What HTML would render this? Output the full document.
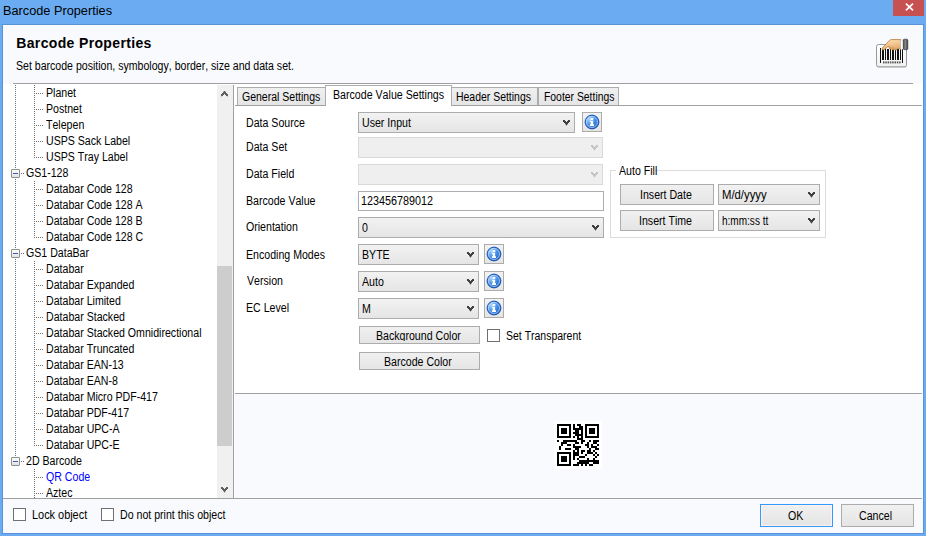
<!DOCTYPE html>
<html><head><meta charset="utf-8"><title>Barcode Properties</title>
<style>
*{margin:0;padding:0;box-sizing:border-box}
html,body{width:926px;height:536px;overflow:hidden}
body{position:relative;background:#6aabf2;font-family:"Liberation Sans",sans-serif;color:#000}
.a{position:absolute}
.t{position:absolute;white-space:nowrap;font-kerning:none;transform-origin:0 0}
.combo{position:absolute;border:1px solid #acacac;background:linear-gradient(#f2f2f2,#e5e5e5)}
.combo.dis{border-color:#d9d9d9;background:#efefef}
.btn{position:absolute;border:1px solid #acacac;background:linear-gradient(#f0f0f0,#e5e5e5);overflow:hidden}
.tb{position:absolute;border:1px solid #abadb3;background:#fff}
.chk{position:absolute;width:13px;height:13px;border:1px solid #707070;background:#fff}
.info{position:absolute;border:1px solid #acacac;background:linear-gradient(#f2f2f2,#e5e5e5)}
</style></head><body>
<div class="a" style="left:2px;top:24px;width:922px;height:510px;background:#5a92d8"></div><div class="a" style="left:3px;top:25px;width:920px;height:508px;background:#fff"></div><div class="a" style="left:3px;top:25px;width:920px;height:59px;background:#f9fafd"></div><div class="t" style="left:2.66px;top:4px;font-size:12.5px;line-height:14px;font-weight:normal;color:#000;transform:scaleX(1.0187);">Barcode Properties</div><div class="a" style="left:893px;top:0px;width:31px;height:16px;background:#c75050"></div><svg class="a" style="left:905px;top:3px" width="9" height="8" viewBox="0 0 9 8"><path d="M0.9 0.7L8 7.3M8 0.7L0.9 7.3" stroke="#fff" stroke-width="1.7"/></svg><div class="t" style="left:16.26px;top:35px;font-size:14px;line-height:16px;font-weight:bold;color:#000;letter-spacing:0.35px;">Barcode Properties</div><div class="t" style="left:15.72px;top:59px;font-size:12px;line-height:14px;font-weight:normal;color:#000;transform:scaleX(0.8808);">Set barcode position, symbology, border, size and data set.</div><div class="a" style="left:13px;top:83px;width:900px;height:1px;background:#a0a0a0"></div><svg class="a" style="left:872px;top:34px" width="40" height="38" viewBox="0 0 40 38">
<defs>
<linearGradient id="cuffg" x1="0" x2="1"><stop offset="0" stop-color="#4a4a4a"/><stop offset="0.45" stop-color="#8a8a8a"/><stop offset="1" stop-color="#3a3a3a"/></linearGradient>
<linearGradient id="skin" x1="0" y1="0" x2="0.3" y2="1"><stop offset="0" stop-color="#fbe0b8"/><stop offset="0.6" stop-color="#f2c48c"/><stop offset="1" stop-color="#e0a868"/></linearGradient>
<linearGradient id="card" x1="0" y1="0" x2="0" y2="1"><stop offset="0" stop-color="#ffffff"/><stop offset="1" stop-color="#f0f0f0"/></linearGradient>
</defs>
<rect x="4.5" y="11.5" width="30.5" height="22.5" rx="2.2" fill="#000" opacity="0.10"/>
<rect x="4.5" y="10.5" width="30" height="22.3" rx="2" fill="url(#card)" stroke="#8f8f8f" stroke-width="0.9"/>
<g fill="#111" shape-rendering="crispEdges">
<rect x="8" y="14" width="1" height="15"/>
<rect x="10" y="15" width="2" height="11"/>
<rect x="13" y="15" width="1" height="11"/>
<rect x="15" y="15" width="2" height="11"/>
<rect x="18" y="15" width="1" height="11"/>
<rect x="20" y="15" width="2" height="11"/>
<rect x="23" y="15" width="1" height="11"/>
<rect x="25" y="15" width="2" height="11"/>
<rect x="28" y="15" width="1" height="11"/>
<rect x="30" y="14" width="1" height="15"/>
</g>
<g fill="#555"><rect x="11" y="27.4" width="1.5" height="2"/><rect x="13.3" y="27.4" width="1.5" height="2"/><rect x="15.6" y="27.4" width="1.5" height="2"/><rect x="17.9" y="27.4" width="1.5" height="2"/><rect x="20.2" y="27.4" width="1.5" height="2"/><rect x="22.5" y="27.4" width="1.5" height="2"/><rect x="24.8" y="27.4" width="1.5" height="2"/><rect x="27.1" y="27.4" width="1.5" height="2"/></g>
<path d="M10.4 15.6C9.9 15.1 10.1 14.3 10.6 13.7L17.2 6.6C17.9 5.9 18.8 5.5 19.8 5.5L28.6 5.6L28.6 14.6L25.2 14.8C25.2 16.1 23.2 16.6 22.4 15.3C21.8 16.1 19.9 16 19.6 14.8C19 15.3 17.3 15.2 17.1 13.8C16.9 13.2 16.6 12.4 16.4 12L12.6 15.4C11.9 16 10.9 16.1 10.4 15.6Z" fill="url(#skin)" stroke="#b27434" stroke-width="0.75" stroke-linejoin="round"/>
<path d="M17.3 12.2C18.1 12.5 18.9 13.2 19.4 14.2M19.9 12.8C20.8 13.1 21.7 13.9 22.2 14.9" fill="none" stroke="#c98c4c" stroke-width="0.55"/>
<rect x="28.4" y="6" width="2.8" height="9.2" fill="#fdfdfd" stroke="#a0a0a0" stroke-width="0.4"/>
<rect x="31.3" y="5.2" width="4.5" height="10.5" rx="1.2" fill="url(#cuffg)" stroke="#2a2a2a" stroke-width="0.6"/>
</svg><div class="a" style="left:3px;top:84px;width:214px;height:414px;overflow:hidden;background:#fff"><svg class="a" style="left:12px;top:1px" width="1" height="83" shape-rendering="crispEdges"><line x1="0.5" y1="0" x2="0.5" y2="83" stroke="#707070" stroke-dasharray="1 1"/></svg><svg class="a" style="left:12px;top:95px" width="1" height="69" shape-rendering="crispEdges"><line x1="0.5" y1="0" x2="0.5" y2="69" stroke="#707070" stroke-dasharray="1 1"/></svg><svg class="a" style="left:12px;top:175px" width="1" height="197" shape-rendering="crispEdges"><line x1="0.5" y1="0" x2="0.5" y2="197" stroke="#707070" stroke-dasharray="1 1"/></svg><svg class="a" style="left:31px;top:1px" width="1" height="73" shape-rendering="crispEdges"><line x1="0.5" y1="0" x2="0.5" y2="73" stroke="#707070" stroke-dasharray="1 1"/></svg><svg class="a" style="left:31px;top:97px" width="1" height="57" shape-rendering="crispEdges"><line x1="0.5" y1="0" x2="0.5" y2="57" stroke="#707070" stroke-dasharray="1 1"/></svg><svg class="a" style="left:31px;top:177px" width="1" height="185" shape-rendering="crispEdges"><line x1="0.5" y1="0" x2="0.5" y2="185" stroke="#707070" stroke-dasharray="1 1"/></svg><svg class="a" style="left:31px;top:385px" width="1" height="29" shape-rendering="crispEdges"><line x1="0.5" y1="0" x2="0.5" y2="29" stroke="#707070" stroke-dasharray="1 1"/></svg><svg class="a" style="left:33px;top:9px" width="7" height="1" shape-rendering="crispEdges"><line x1="0" y1="0.5" x2="7" y2="0.5" stroke="#707070" stroke-dasharray="1 1"/></svg><div class="t" style="left:42.63px;top:2px;font-size:12px;line-height:14px;font-weight:normal;color:#000;transform:scaleX(0.8830);">Planet</div><svg class="a" style="left:33px;top:25px" width="7" height="1" shape-rendering="crispEdges"><line x1="0" y1="0.5" x2="7" y2="0.5" stroke="#707070" stroke-dasharray="1 1"/></svg><div class="t" style="left:42.63px;top:18px;font-size:12px;line-height:14px;font-weight:normal;color:#000;transform:scaleX(0.8830);">Postnet</div><svg class="a" style="left:33px;top:41px" width="7" height="1" shape-rendering="crispEdges"><line x1="0" y1="0.5" x2="7" y2="0.5" stroke="#707070" stroke-dasharray="1 1"/></svg><div class="t" style="left:43.26px;top:34px;font-size:12px;line-height:14px;font-weight:normal;color:#000;transform:scaleX(0.8830);">Telepen</div><svg class="a" style="left:33px;top:57px" width="7" height="1" shape-rendering="crispEdges"><line x1="0" y1="0.5" x2="7" y2="0.5" stroke="#707070" stroke-dasharray="1 1"/></svg><div class="t" style="left:42.68px;top:50px;font-size:12px;line-height:14px;font-weight:normal;color:#000;transform:scaleX(0.8830);">USPS Sack Label</div><svg class="a" style="left:33px;top:73px" width="7" height="1" shape-rendering="crispEdges"><line x1="0" y1="0.5" x2="7" y2="0.5" stroke="#707070" stroke-dasharray="1 1"/></svg><div class="t" style="left:42.68px;top:66px;font-size:12px;line-height:14px;font-weight:normal;color:#000;transform:scaleX(0.8830);">USPS Tray Label</div><div class="a" style="left:8px;top:85px;width:9px;height:9px;border:1px solid #8e8f8f;border-radius:1px;background:linear-gradient(#fcfcfc,#e2e2e2)"></div><div class="a" style="left:10px;top:89px;width:5px;height:1px;background:#3c5fad"></div><svg class="a" style="left:18px;top:89px" width="3" height="1" shape-rendering="crispEdges"><line x1="0" y1="0.5" x2="3" y2="0.5" stroke="#707070" stroke-dasharray="1 1"/></svg><div class="t" style="left:23.07px;top:82px;font-size:12px;line-height:14px;font-weight:normal;color:#000;transform:scaleX(0.8830);">GS1-128</div><svg class="a" style="left:33px;top:105px" width="7" height="1" shape-rendering="crispEdges"><line x1="0" y1="0.5" x2="7" y2="0.5" stroke="#707070" stroke-dasharray="1 1"/></svg><div class="t" style="left:42.63px;top:98px;font-size:12px;line-height:14px;font-weight:normal;color:#000;transform:scaleX(0.8830);">Databar Code 128</div><svg class="a" style="left:33px;top:121px" width="7" height="1" shape-rendering="crispEdges"><line x1="0" y1="0.5" x2="7" y2="0.5" stroke="#707070" stroke-dasharray="1 1"/></svg><div class="t" style="left:42.63px;top:114px;font-size:12px;line-height:14px;font-weight:normal;color:#000;transform:scaleX(0.8830);">Databar Code 128 A</div><svg class="a" style="left:33px;top:137px" width="7" height="1" shape-rendering="crispEdges"><line x1="0" y1="0.5" x2="7" y2="0.5" stroke="#707070" stroke-dasharray="1 1"/></svg><div class="t" style="left:42.63px;top:130px;font-size:12px;line-height:14px;font-weight:normal;color:#000;transform:scaleX(0.8830);">Databar Code 128 B</div><svg class="a" style="left:33px;top:153px" width="7" height="1" shape-rendering="crispEdges"><line x1="0" y1="0.5" x2="7" y2="0.5" stroke="#707070" stroke-dasharray="1 1"/></svg><div class="t" style="left:42.63px;top:146px;font-size:12px;line-height:14px;font-weight:normal;color:#000;transform:scaleX(0.8830);">Databar Code 128 C</div><div class="a" style="left:8px;top:165px;width:9px;height:9px;border:1px solid #8e8f8f;border-radius:1px;background:linear-gradient(#fcfcfc,#e2e2e2)"></div><div class="a" style="left:10px;top:169px;width:5px;height:1px;background:#3c5fad"></div><svg class="a" style="left:18px;top:169px" width="3" height="1" shape-rendering="crispEdges"><line x1="0" y1="0.5" x2="3" y2="0.5" stroke="#707070" stroke-dasharray="1 1"/></svg><div class="t" style="left:23.07px;top:162px;font-size:12px;line-height:14px;font-weight:normal;color:#000;transform:scaleX(0.8830);">GS1 DataBar</div><svg class="a" style="left:33px;top:185px" width="7" height="1" shape-rendering="crispEdges"><line x1="0" y1="0.5" x2="7" y2="0.5" stroke="#707070" stroke-dasharray="1 1"/></svg><div class="t" style="left:42.63px;top:178px;font-size:12px;line-height:14px;font-weight:normal;color:#000;transform:scaleX(0.8830);">Databar</div><svg class="a" style="left:33px;top:201px" width="7" height="1" shape-rendering="crispEdges"><line x1="0" y1="0.5" x2="7" y2="0.5" stroke="#707070" stroke-dasharray="1 1"/></svg><div class="t" style="left:42.63px;top:194px;font-size:12px;line-height:14px;font-weight:normal;color:#000;transform:scaleX(0.8830);">Databar Expanded</div><svg class="a" style="left:33px;top:217px" width="7" height="1" shape-rendering="crispEdges"><line x1="0" y1="0.5" x2="7" y2="0.5" stroke="#707070" stroke-dasharray="1 1"/></svg><div class="t" style="left:42.63px;top:210px;font-size:12px;line-height:14px;font-weight:normal;color:#000;transform:scaleX(0.8830);">Databar Limited</div><svg class="a" style="left:33px;top:233px" width="7" height="1" shape-rendering="crispEdges"><line x1="0" y1="0.5" x2="7" y2="0.5" stroke="#707070" stroke-dasharray="1 1"/></svg><div class="t" style="left:42.63px;top:226px;font-size:12px;line-height:14px;font-weight:normal;color:#000;transform:scaleX(0.8830);">Databar Stacked</div><svg class="a" style="left:33px;top:249px" width="7" height="1" shape-rendering="crispEdges"><line x1="0" y1="0.5" x2="7" y2="0.5" stroke="#707070" stroke-dasharray="1 1"/></svg><div class="t" style="left:42.63px;top:242px;font-size:12px;line-height:14px;font-weight:normal;color:#000;transform:scaleX(0.8830);">Databar Stacked Omnidirectional</div><svg class="a" style="left:33px;top:265px" width="7" height="1" shape-rendering="crispEdges"><line x1="0" y1="0.5" x2="7" y2="0.5" stroke="#707070" stroke-dasharray="1 1"/></svg><div class="t" style="left:42.63px;top:258px;font-size:12px;line-height:14px;font-weight:normal;color:#000;transform:scaleX(0.8830);">Databar Truncated</div><svg class="a" style="left:33px;top:281px" width="7" height="1" shape-rendering="crispEdges"><line x1="0" y1="0.5" x2="7" y2="0.5" stroke="#707070" stroke-dasharray="1 1"/></svg><div class="t" style="left:42.63px;top:274px;font-size:12px;line-height:14px;font-weight:normal;color:#000;transform:scaleX(0.8830);">Databar EAN-13</div><svg class="a" style="left:33px;top:297px" width="7" height="1" shape-rendering="crispEdges"><line x1="0" y1="0.5" x2="7" y2="0.5" stroke="#707070" stroke-dasharray="1 1"/></svg><div class="t" style="left:42.63px;top:290px;font-size:12px;line-height:14px;font-weight:normal;color:#000;transform:scaleX(0.8830);">Databar EAN-8</div><svg class="a" style="left:33px;top:313px" width="7" height="1" shape-rendering="crispEdges"><line x1="0" y1="0.5" x2="7" y2="0.5" stroke="#707070" stroke-dasharray="1 1"/></svg><div class="t" style="left:42.63px;top:306px;font-size:12px;line-height:14px;font-weight:normal;color:#000;transform:scaleX(0.8830);">Databar Micro PDF-417</div><svg class="a" style="left:33px;top:329px" width="7" height="1" shape-rendering="crispEdges"><line x1="0" y1="0.5" x2="7" y2="0.5" stroke="#707070" stroke-dasharray="1 1"/></svg><div class="t" style="left:42.63px;top:322px;font-size:12px;line-height:14px;font-weight:normal;color:#000;transform:scaleX(0.8830);">Databar PDF-417</div><svg class="a" style="left:33px;top:345px" width="7" height="1" shape-rendering="crispEdges"><line x1="0" y1="0.5" x2="7" y2="0.5" stroke="#707070" stroke-dasharray="1 1"/></svg><div class="t" style="left:42.63px;top:338px;font-size:12px;line-height:14px;font-weight:normal;color:#000;transform:scaleX(0.8830);">Databar UPC-A</div><svg class="a" style="left:33px;top:361px" width="7" height="1" shape-rendering="crispEdges"><line x1="0" y1="0.5" x2="7" y2="0.5" stroke="#707070" stroke-dasharray="1 1"/></svg><div class="t" style="left:42.63px;top:354px;font-size:12px;line-height:14px;font-weight:normal;color:#000;transform:scaleX(0.8830);">Databar UPC-E</div><div class="a" style="left:8px;top:373px;width:9px;height:9px;border:1px solid #8e8f8f;border-radius:1px;background:linear-gradient(#fcfcfc,#e2e2e2)"></div><div class="a" style="left:10px;top:377px;width:5px;height:1px;background:#3c5fad"></div><svg class="a" style="left:18px;top:377px" width="3" height="1" shape-rendering="crispEdges"><line x1="0" y1="0.5" x2="3" y2="0.5" stroke="#707070" stroke-dasharray="1 1"/></svg><div class="t" style="left:23.07px;top:370px;font-size:12px;line-height:14px;font-weight:normal;color:#000;transform:scaleX(0.8830);">2D Barcode</div><svg class="a" style="left:33px;top:393px" width="7" height="1" shape-rendering="crispEdges"><line x1="0" y1="0.5" x2="7" y2="0.5" stroke="#707070" stroke-dasharray="1 1"/></svg><div class="t" style="left:43.00px;top:386px;font-size:12px;line-height:14px;font-weight:normal;color:#0000ff;transform:scaleX(0.8830);">QR Code</div><svg class="a" style="left:33px;top:409px" width="7" height="1" shape-rendering="crispEdges"><line x1="0" y1="0.5" x2="7" y2="0.5" stroke="#707070" stroke-dasharray="1 1"/></svg><div class="t" style="left:43.48px;top:402px;font-size:12px;line-height:14px;font-weight:normal;color:#000;transform:scaleX(0.8830);">Aztec</div></div><div class="a" style="left:217px;top:85px;width:16px;height:413px;background:#f0f0f0"></div><div class="a" style="left:217px;top:266px;width:15px;height:180px;background:#cdcdcd"></div><svg class="a" style="left:221px;top:91px" width="7" height="6" viewBox="0 0 7 6" shape-rendering="crispEdges"><path d="M3 0h1v1h-1zM2 1h3v1h-3zM1 2h5v1h-5zM0 3h3v1h-3zM4 3h3v1h-3zM0 4h2v1h-2zM5 4h2v1h-2z" fill="#606060"/><path d="M0 5h1v1h-1zM6 5h1v1h-1zM2 0h1v1h-1zM4 0h1v1h-1z" fill="#606060" opacity="0.35"/></svg><svg class="a" style="left:221px;top:487px" width="7" height="6" viewBox="0 0 7 6" shape-rendering="crispEdges"><path d="M0 0h2v1h-2zM5 0h2v1h-2zM0 1h3v1h-3zM4 1h3v1h-3zM1 2h5v1h-5zM2 3h3v1h-3zM3 4h1v1h-1z" fill="#606060"/><path d="M2 4h1v1h-1zM4 4h1v1h-1zM3 5h1v1h-1z" fill="#606060" opacity="0.35"/></svg><div class="a" style="left:233px;top:85px;width:1px;height:413px;background:#a0a0a0"></div><div class="a" style="left:235px;top:105px;width:687px;height:1px;background:#a0a0a0"></div><div class="a" style="left:237px;top:87px;width:89px;height:18px;background:linear-gradient(#f0f0f0,#e5e5e5);border:1px solid #acacac;border-bottom:none"></div><div class="t" style="left:242.47px;top:90px;font-size:12px;line-height:14px;font-weight:normal;color:#000;transform:scaleX(0.8761);">General Settings</div><div class="a" style="left:451px;top:87px;width:87px;height:18px;background:linear-gradient(#f0f0f0,#e5e5e5);border:1px solid #acacac;border-bottom:none"></div><div class="t" style="left:456.14px;top:90px;font-size:12px;line-height:14px;font-weight:normal;color:#000;transform:scaleX(0.8708);">Header Settings</div><div class="a" style="left:538px;top:87px;width:81px;height:18px;background:linear-gradient(#f0f0f0,#e5e5e5);border:1px solid #acacac;border-bottom:none"></div><div class="t" style="left:543.85px;top:90px;font-size:12px;line-height:14px;font-weight:normal;color:#000;transform:scaleX(0.8655);">Footer Settings</div><div class="a" style="left:325px;top:85px;width:127px;height:21px;background:#fff;border:1px solid #acacac;border-bottom:none"></div><div class="t" style="left:332.53px;top:88px;font-size:12px;line-height:14px;font-weight:normal;color:#000;transform:scaleX(0.8855);">Barcode Value Settings</div><div class="t" style="left:245.73px;top:116px;font-size:12px;line-height:14px;font-weight:normal;color:#000;transform:scaleX(0.8830);">Data Source</div><div class="t" style="left:245.73px;top:140px;font-size:12px;line-height:14px;font-weight:normal;color:#000;transform:scaleX(0.8830);">Data Set</div><div class="t" style="left:245.73px;top:167px;font-size:12px;line-height:14px;font-weight:normal;color:#000;transform:scaleX(0.8830);">Data Field</div><div class="t" style="left:245.73px;top:194px;font-size:12px;line-height:14px;font-weight:normal;color:#000;transform:scaleX(0.8830);">Barcode Value</div><div class="t" style="left:246.10px;top:220px;font-size:12px;line-height:14px;font-weight:normal;color:#000;transform:scaleX(0.8830);">Orientation</div><div class="t" style="left:245.73px;top:248px;font-size:12px;line-height:14px;font-weight:normal;color:#000;transform:scaleX(0.8830);">Encoding Modes</div><div class="t" style="left:246.55px;top:274px;font-size:12px;line-height:14px;font-weight:normal;color:#000;transform:scaleX(0.8830);">Version</div><div class="t" style="left:245.73px;top:301px;font-size:12px;line-height:14px;font-weight:normal;color:#000;transform:scaleX(0.8830);">EC Level</div><div class="combo" style="left:358px;top:112px;width:217px;height:21px"></div><div class="t" style="left:361.68px;top:116px;font-size:12px;line-height:14px;font-weight:normal;color:#000;transform:scaleX(0.8830);">User Input</div><svg class="a" style="left:563px;top:120px" width="7" height="6" viewBox="0 0 7 6" shape-rendering="crispEdges"><path d="M0 0h2v1h-2zM5 0h2v1h-2zM0 1h3v1h-3zM4 1h3v1h-3zM1 2h5v1h-5zM2 3h3v1h-3zM3 4h1v1h-1z" fill="#404040"/><path d="M2 4h1v1h-1zM4 4h1v1h-1zM3 5h1v1h-1z" fill="#404040" opacity="0.35"/></svg><div class="info" style="left:582px;top:112px;width:20px;height:20px"></div><svg class="a" style="left:582px;top:112px" width="20" height="20" viewBox="0 0 20 20">
<defs><radialGradient id="ig582_112" cx="0.32" cy="0.3" r="0.9"><stop offset="0" stop-color="#a9d6ff"/><stop offset="0.5" stop-color="#3a88e4"/><stop offset="1" stop-color="#1450b0"/></radialGradient></defs>
<circle cx="10" cy="10" r="6.9" fill="url(#ig582_112)" stroke="#1a52ae" stroke-width="1"/>
<circle cx="10" cy="10" r="5.5" fill="none" stroke="#e0f0ff" stroke-width="0.8" opacity="0.75"/>
<path d="M8.9 5.9L11.5 5.9L11 7.9L8.3 7.9Z" fill="#fff"/>
<path d="M8.1 8.8H11.1V12.2H12V13.9H7.9V12.2H8.8V10.2H8.1Z" fill="#fff"/>
</svg><div class="combo dis" style="left:358px;top:137px;width:245px;height:21px"></div><svg class="a" style="left:591px;top:145px" width="7" height="6" viewBox="0 0 7 6" shape-rendering="crispEdges"><path d="M0 0h2v1h-2zM5 0h2v1h-2zM0 1h3v1h-3zM4 1h3v1h-3zM1 2h5v1h-5zM2 3h3v1h-3zM3 4h1v1h-1z" fill="#c4c4c4"/><path d="M2 4h1v1h-1zM4 4h1v1h-1zM3 5h1v1h-1z" fill="#c4c4c4" opacity="0.35"/></svg><div class="combo dis" style="left:358px;top:164px;width:245px;height:21px"></div><svg class="a" style="left:591px;top:172px" width="7" height="6" viewBox="0 0 7 6" shape-rendering="crispEdges"><path d="M0 0h2v1h-2zM5 0h2v1h-2zM0 1h3v1h-3zM4 1h3v1h-3zM1 2h5v1h-5zM2 3h3v1h-3zM3 4h1v1h-1z" fill="#c4c4c4"/><path d="M2 4h1v1h-1zM4 4h1v1h-1zM3 5h1v1h-1z" fill="#c4c4c4" opacity="0.35"/></svg><div class="tb" style="left:358px;top:191px;width:246px;height:20px;"></div><div class="t" style="left:360.78px;top:194px;font-size:12px;line-height:14px;font-weight:normal;color:#000;transform:scaleX(0.8999);">123456789012</div><div class="combo" style="left:358px;top:217px;width:246px;height:21px"></div><div class="t" style="left:362.09px;top:221px;font-size:12px;line-height:14px;font-weight:normal;color:#000;transform:scaleX(0.8830);">0</div><svg class="a" style="left:592px;top:225px" width="7" height="6" viewBox="0 0 7 6" shape-rendering="crispEdges"><path d="M0 0h2v1h-2zM5 0h2v1h-2zM0 1h3v1h-3zM4 1h3v1h-3zM1 2h5v1h-5zM2 3h3v1h-3zM3 4h1v1h-1z" fill="#404040"/><path d="M2 4h1v1h-1zM4 4h1v1h-1zM3 5h1v1h-1z" fill="#404040" opacity="0.35"/></svg><div class="combo" style="left:358px;top:244px;width:121px;height:21px"></div><div class="t" style="left:361.63px;top:248px;font-size:12px;line-height:14px;font-weight:normal;color:#000;transform:scaleX(0.8830);">BYTE</div><svg class="a" style="left:467px;top:252px" width="7" height="6" viewBox="0 0 7 6" shape-rendering="crispEdges"><path d="M0 0h2v1h-2zM5 0h2v1h-2zM0 1h3v1h-3zM4 1h3v1h-3zM1 2h5v1h-5zM2 3h3v1h-3zM3 4h1v1h-1z" fill="#404040"/><path d="M2 4h1v1h-1zM4 4h1v1h-1zM3 5h1v1h-1z" fill="#404040" opacity="0.35"/></svg><div class="info" style="left:484px;top:244px;width:20px;height:20px"></div><svg class="a" style="left:484px;top:244px" width="20" height="20" viewBox="0 0 20 20">
<defs><radialGradient id="ig484_244" cx="0.32" cy="0.3" r="0.9"><stop offset="0" stop-color="#a9d6ff"/><stop offset="0.5" stop-color="#3a88e4"/><stop offset="1" stop-color="#1450b0"/></radialGradient></defs>
<circle cx="10" cy="10" r="6.9" fill="url(#ig484_244)" stroke="#1a52ae" stroke-width="1"/>
<circle cx="10" cy="10" r="5.5" fill="none" stroke="#e0f0ff" stroke-width="0.8" opacity="0.75"/>
<path d="M8.9 5.9L11.5 5.9L11 7.9L8.3 7.9Z" fill="#fff"/>
<path d="M8.1 8.8H11.1V12.2H12V13.9H7.9V12.2H8.8V10.2H8.1Z" fill="#fff"/>
</svg><div class="combo" style="left:358px;top:271px;width:121px;height:21px"></div><div class="t" style="left:362.48px;top:275px;font-size:12px;line-height:14px;font-weight:normal;color:#000;transform:scaleX(0.8830);">Auto</div><svg class="a" style="left:467px;top:279px" width="7" height="6" viewBox="0 0 7 6" shape-rendering="crispEdges"><path d="M0 0h2v1h-2zM5 0h2v1h-2zM0 1h3v1h-3zM4 1h3v1h-3zM1 2h5v1h-5zM2 3h3v1h-3zM3 4h1v1h-1z" fill="#404040"/><path d="M2 4h1v1h-1zM4 4h1v1h-1zM3 5h1v1h-1z" fill="#404040" opacity="0.35"/></svg><div class="info" style="left:484px;top:271px;width:20px;height:20px"></div><svg class="a" style="left:484px;top:271px" width="20" height="20" viewBox="0 0 20 20">
<defs><radialGradient id="ig484_271" cx="0.32" cy="0.3" r="0.9"><stop offset="0" stop-color="#a9d6ff"/><stop offset="0.5" stop-color="#3a88e4"/><stop offset="1" stop-color="#1450b0"/></radialGradient></defs>
<circle cx="10" cy="10" r="6.9" fill="url(#ig484_271)" stroke="#1a52ae" stroke-width="1"/>
<circle cx="10" cy="10" r="5.5" fill="none" stroke="#e0f0ff" stroke-width="0.8" opacity="0.75"/>
<path d="M8.9 5.9L11.5 5.9L11 7.9L8.3 7.9Z" fill="#fff"/>
<path d="M8.1 8.8H11.1V12.2H12V13.9H7.9V12.2H8.8V10.2H8.1Z" fill="#fff"/>
</svg><div class="combo" style="left:358px;top:298px;width:121px;height:21px"></div><div class="t" style="left:361.63px;top:302px;font-size:12px;line-height:14px;font-weight:normal;color:#000;transform:scaleX(0.8830);">M</div><svg class="a" style="left:467px;top:306px" width="7" height="6" viewBox="0 0 7 6" shape-rendering="crispEdges"><path d="M0 0h2v1h-2zM5 0h2v1h-2zM0 1h3v1h-3zM4 1h3v1h-3zM1 2h5v1h-5zM2 3h3v1h-3zM3 4h1v1h-1z" fill="#404040"/><path d="M2 4h1v1h-1zM4 4h1v1h-1zM3 5h1v1h-1z" fill="#404040" opacity="0.35"/></svg><div class="info" style="left:484px;top:298px;width:20px;height:20px"></div><svg class="a" style="left:484px;top:298px" width="20" height="20" viewBox="0 0 20 20">
<defs><radialGradient id="ig484_298" cx="0.32" cy="0.3" r="0.9"><stop offset="0" stop-color="#a9d6ff"/><stop offset="0.5" stop-color="#3a88e4"/><stop offset="1" stop-color="#1450b0"/></radialGradient></defs>
<circle cx="10" cy="10" r="6.9" fill="url(#ig484_298)" stroke="#1a52ae" stroke-width="1"/>
<circle cx="10" cy="10" r="5.5" fill="none" stroke="#e0f0ff" stroke-width="0.8" opacity="0.75"/>
<path d="M8.9 5.9L11.5 5.9L11 7.9L8.3 7.9Z" fill="#fff"/>
<path d="M8.1 8.8H11.1V12.2H12V13.9H7.9V12.2H8.8V10.2H8.1Z" fill="#fff"/>
</svg><div class="btn" style="left:359px;top:326px;width:121px;height:18px;border-color:#acacac;"><div class="a" style="left:0;top:0;width:100%;height:14px;overflow:hidden"><div class="t" style="left:15.75px;top:2px;font-size:12px;line-height:14px;font-weight:normal;color:#000;transform:scaleX(0.8830);">Background Color</div></div></div><div class="chk" style="left:487px;top:329px;width:13px;height:13px;"></div><div class="t" style="left:505.62px;top:329px;font-size:12px;line-height:14px;font-weight:normal;color:#000;transform:scaleX(0.8734);">Set Transparent</div><div class="btn" style="left:359px;top:352px;width:121px;height:18px;border-color:#acacac;"><div class="a" style="left:0;top:0;width:100%;height:14px;overflow:hidden"><div class="t" style="left:24.29px;top:2px;font-size:12px;line-height:14px;font-weight:normal;color:#000;transform:scaleX(0.8830);">Barcode Color</div></div></div><div class="a" style="left:610px;top:170px;width:216px;height:68px;border:1px solid #dcdcdc"></div><div class="a" style="left:616px;top:166px;width:39px;height:8px;background:#fff"></div><div class="t" style="left:618.78px;top:164px;font-size:12px;line-height:14px;font-weight:normal;color:#000;transform:scaleX(0.8830);">Auto Fill</div><div class="btn" style="left:620px;top:184px;width:94px;height:21px;border-color:#acacac;"><div class="a" style="left:0;top:0;width:100%;height:17px;overflow:hidden"><div class="t" style="left:18.83px;top:3px;font-size:12px;line-height:14px;font-weight:normal;color:#000;transform:scaleX(0.8830);">Insert Date</div></div></div><div class="combo" style="left:718px;top:184px;width:102px;height:21px"></div><div class="t" style="left:721.57px;top:188px;font-size:12px;line-height:14px;font-weight:normal;color:#000;transform:scaleX(0.9432);">M/d/yyyy</div><svg class="a" style="left:808px;top:192px" width="7" height="6" viewBox="0 0 7 6" shape-rendering="crispEdges"><path d="M0 0h2v1h-2zM5 0h2v1h-2zM0 1h3v1h-3zM4 1h3v1h-3zM1 2h5v1h-5zM2 3h3v1h-3zM3 4h1v1h-1z" fill="#404040"/><path d="M2 4h1v1h-1zM4 4h1v1h-1zM3 5h1v1h-1z" fill="#404040" opacity="0.35"/></svg><div class="btn" style="left:620px;top:210px;width:94px;height:21px;border-color:#acacac;"><div class="a" style="left:0;top:0;width:100%;height:17px;overflow:hidden"><div class="t" style="left:18.25px;top:3px;font-size:12px;line-height:14px;font-weight:normal;color:#000;transform:scaleX(0.8830);">Insert Time</div></div></div><div class="combo" style="left:718px;top:210px;width:102px;height:21px"></div><div class="t" style="left:721.80px;top:214px;font-size:12px;line-height:14px;font-weight:normal;color:#000;transform:scaleX(0.8362);">h:mm:ss tt</div><svg class="a" style="left:808px;top:218px" width="7" height="6" viewBox="0 0 7 6" shape-rendering="crispEdges"><path d="M0 0h2v1h-2zM5 0h2v1h-2zM0 1h3v1h-3zM4 1h3v1h-3zM1 2h5v1h-5zM2 3h3v1h-3zM3 4h1v1h-1z" fill="#404040"/><path d="M2 4h1v1h-1zM4 4h1v1h-1zM3 5h1v1h-1z" fill="#404040" opacity="0.35"/></svg><div class="a" style="left:235px;top:393px;width:687px;height:1px;background:#a0a0a0"></div><div class="a" style="left:235px;top:394px;width:687px;height:104px;background:#f9fafd"></div><svg class="a" style="left:554px;top:421px" width="48" height="48" viewBox="0 0 48 48" shape-rendering="crispEdges"><rect width="48" height="48" fill="#fff"/><path d="M3 3h2v2h-2zM5 3h2v2h-2zM7 3h2v2h-2zM9 3h2v2h-2zM11 3h2v2h-2zM13 3h2v2h-2zM15 3h2v2h-2zM19 3h2v2h-2zM23 3h2v2h-2zM25 3h2v2h-2zM31 3h2v2h-2zM33 3h2v2h-2zM35 3h2v2h-2zM37 3h2v2h-2zM39 3h2v2h-2zM41 3h2v2h-2zM43 3h2v2h-2zM3 5h2v2h-2zM15 5h2v2h-2zM19 5h2v2h-2zM25 5h2v2h-2zM27 5h2v2h-2zM31 5h2v2h-2zM43 5h2v2h-2zM3 7h2v2h-2zM7 7h2v2h-2zM9 7h2v2h-2zM11 7h2v2h-2zM15 7h2v2h-2zM19 7h2v2h-2zM21 7h2v2h-2zM23 7h2v2h-2zM25 7h2v2h-2zM27 7h2v2h-2zM31 7h2v2h-2zM35 7h2v2h-2zM37 7h2v2h-2zM39 7h2v2h-2zM43 7h2v2h-2zM3 9h2v2h-2zM7 9h2v2h-2zM9 9h2v2h-2zM11 9h2v2h-2zM15 9h2v2h-2zM21 9h2v2h-2zM23 9h2v2h-2zM27 9h2v2h-2zM31 9h2v2h-2zM35 9h2v2h-2zM37 9h2v2h-2zM39 9h2v2h-2zM43 9h2v2h-2zM3 11h2v2h-2zM7 11h2v2h-2zM9 11h2v2h-2zM11 11h2v2h-2zM15 11h2v2h-2zM19 11h2v2h-2zM21 11h2v2h-2zM23 11h2v2h-2zM27 11h2v2h-2zM31 11h2v2h-2zM35 11h2v2h-2zM37 11h2v2h-2zM39 11h2v2h-2zM43 11h2v2h-2zM3 13h2v2h-2zM15 13h2v2h-2zM21 13h2v2h-2zM23 13h2v2h-2zM25 13h2v2h-2zM27 13h2v2h-2zM31 13h2v2h-2zM43 13h2v2h-2zM3 15h2v2h-2zM5 15h2v2h-2zM7 15h2v2h-2zM9 15h2v2h-2zM11 15h2v2h-2zM13 15h2v2h-2zM15 15h2v2h-2zM19 15h2v2h-2zM23 15h2v2h-2zM27 15h2v2h-2zM31 15h2v2h-2zM33 15h2v2h-2zM35 15h2v2h-2zM37 15h2v2h-2zM39 15h2v2h-2zM41 15h2v2h-2zM43 15h2v2h-2zM23 17h2v2h-2zM25 17h2v2h-2zM27 17h2v2h-2zM3 19h2v2h-2zM9 19h2v2h-2zM11 19h2v2h-2zM13 19h2v2h-2zM15 19h2v2h-2zM17 19h2v2h-2zM19 19h2v2h-2zM21 19h2v2h-2zM27 19h2v2h-2zM29 19h2v2h-2zM35 19h2v2h-2zM39 19h2v2h-2zM41 19h2v2h-2zM43 19h2v2h-2zM7 21h2v2h-2zM9 21h2v2h-2zM11 21h2v2h-2zM21 21h2v2h-2zM23 21h2v2h-2zM27 21h2v2h-2zM33 21h2v2h-2zM39 21h2v2h-2zM41 21h2v2h-2zM7 23h2v2h-2zM13 23h2v2h-2zM15 23h2v2h-2zM19 23h2v2h-2zM31 23h2v2h-2zM33 23h2v2h-2zM37 23h2v2h-2zM43 23h2v2h-2zM5 25h2v2h-2zM19 25h2v2h-2zM21 25h2v2h-2zM23 25h2v2h-2zM25 25h2v2h-2zM33 25h2v2h-2zM37 25h2v2h-2zM39 25h2v2h-2zM41 25h2v2h-2zM5 27h2v2h-2zM11 27h2v2h-2zM13 27h2v2h-2zM15 27h2v2h-2zM21 27h2v2h-2zM23 27h2v2h-2zM35 27h2v2h-2zM41 27h2v2h-2zM43 27h2v2h-2zM19 29h2v2h-2zM23 29h2v2h-2zM27 29h2v2h-2zM29 29h2v2h-2zM33 29h2v2h-2zM35 29h2v2h-2zM39 29h2v2h-2zM3 31h2v2h-2zM5 31h2v2h-2zM7 31h2v2h-2zM9 31h2v2h-2zM11 31h2v2h-2zM13 31h2v2h-2zM15 31h2v2h-2zM19 31h2v2h-2zM21 31h2v2h-2zM23 31h2v2h-2zM27 31h2v2h-2zM33 31h2v2h-2zM35 31h2v2h-2zM37 31h2v2h-2zM41 31h2v2h-2zM3 33h2v2h-2zM15 33h2v2h-2zM19 33h2v2h-2zM21 33h2v2h-2zM23 33h2v2h-2zM31 33h2v2h-2zM39 33h2v2h-2zM43 33h2v2h-2zM3 35h2v2h-2zM7 35h2v2h-2zM9 35h2v2h-2zM11 35h2v2h-2zM15 35h2v2h-2zM19 35h2v2h-2zM25 35h2v2h-2zM27 35h2v2h-2zM29 35h2v2h-2zM41 35h2v2h-2zM3 37h2v2h-2zM7 37h2v2h-2zM9 37h2v2h-2zM11 37h2v2h-2zM15 37h2v2h-2zM19 37h2v2h-2zM23 37h2v2h-2zM33 37h2v2h-2zM39 37h2v2h-2zM3 39h2v2h-2zM7 39h2v2h-2zM9 39h2v2h-2zM11 39h2v2h-2zM15 39h2v2h-2zM25 39h2v2h-2zM27 39h2v2h-2zM29 39h2v2h-2zM31 39h2v2h-2zM33 39h2v2h-2zM35 39h2v2h-2zM37 39h2v2h-2zM39 39h2v2h-2zM41 39h2v2h-2zM43 39h2v2h-2zM3 41h2v2h-2zM15 41h2v2h-2zM23 41h2v2h-2zM25 41h2v2h-2zM27 41h2v2h-2zM29 41h2v2h-2zM31 41h2v2h-2zM33 41h2v2h-2zM39 41h2v2h-2zM41 41h2v2h-2zM43 41h2v2h-2zM3 43h2v2h-2zM5 43h2v2h-2zM7 43h2v2h-2zM9 43h2v2h-2zM11 43h2v2h-2zM13 43h2v2h-2zM15 43h2v2h-2zM19 43h2v2h-2zM21 43h2v2h-2zM23 43h2v2h-2zM27 43h2v2h-2zM31 43h2v2h-2zM35 43h2v2h-2zM37 43h2v2h-2z" fill="#000"/></svg><div class="a" style="left:3px;top:498px;width:919px;height:1px;background:#a0a0a0"></div><div class="a" style="left:3px;top:499px;width:920px;height:34px;background:#f9fafd"></div><div class="chk" style="left:13px;top:508px;width:13px;height:13px;"></div><div class="t" style="left:31.71px;top:508px;font-size:12px;line-height:14px;font-weight:normal;color:#000;transform:scaleX(0.9089);">Lock object</div><div class="chk" style="left:101px;top:508px;width:13px;height:13px;"></div><div class="t" style="left:119.93px;top:508px;font-size:12px;line-height:14px;font-weight:normal;color:#000;transform:scaleX(0.8832);">Do not print this object</div><div class="btn" style="left:760px;top:504px;width:73px;height:23px;border-color:#3399ff;box-shadow:inset 0 0 0 1px #fbf3ec"><div class="a" style="left:0;top:0;width:100%;height:19px;overflow:hidden"><div class="t" style="left:26.65px;top:4px;font-size:12px;line-height:14px;font-weight:normal;color:#000;transform:scaleX(0.8830);">OK</div></div></div><div class="btn" style="left:841px;top:504px;width:73px;height:23px;border-color:#acacac;"><div class="a" style="left:0;top:0;width:100%;height:19px;overflow:hidden"><div class="t" style="left:17.29px;top:4px;font-size:12px;line-height:14px;font-weight:normal;color:#000;transform:scaleX(0.8830);">Cancel</div></div></div>
</body></html>
